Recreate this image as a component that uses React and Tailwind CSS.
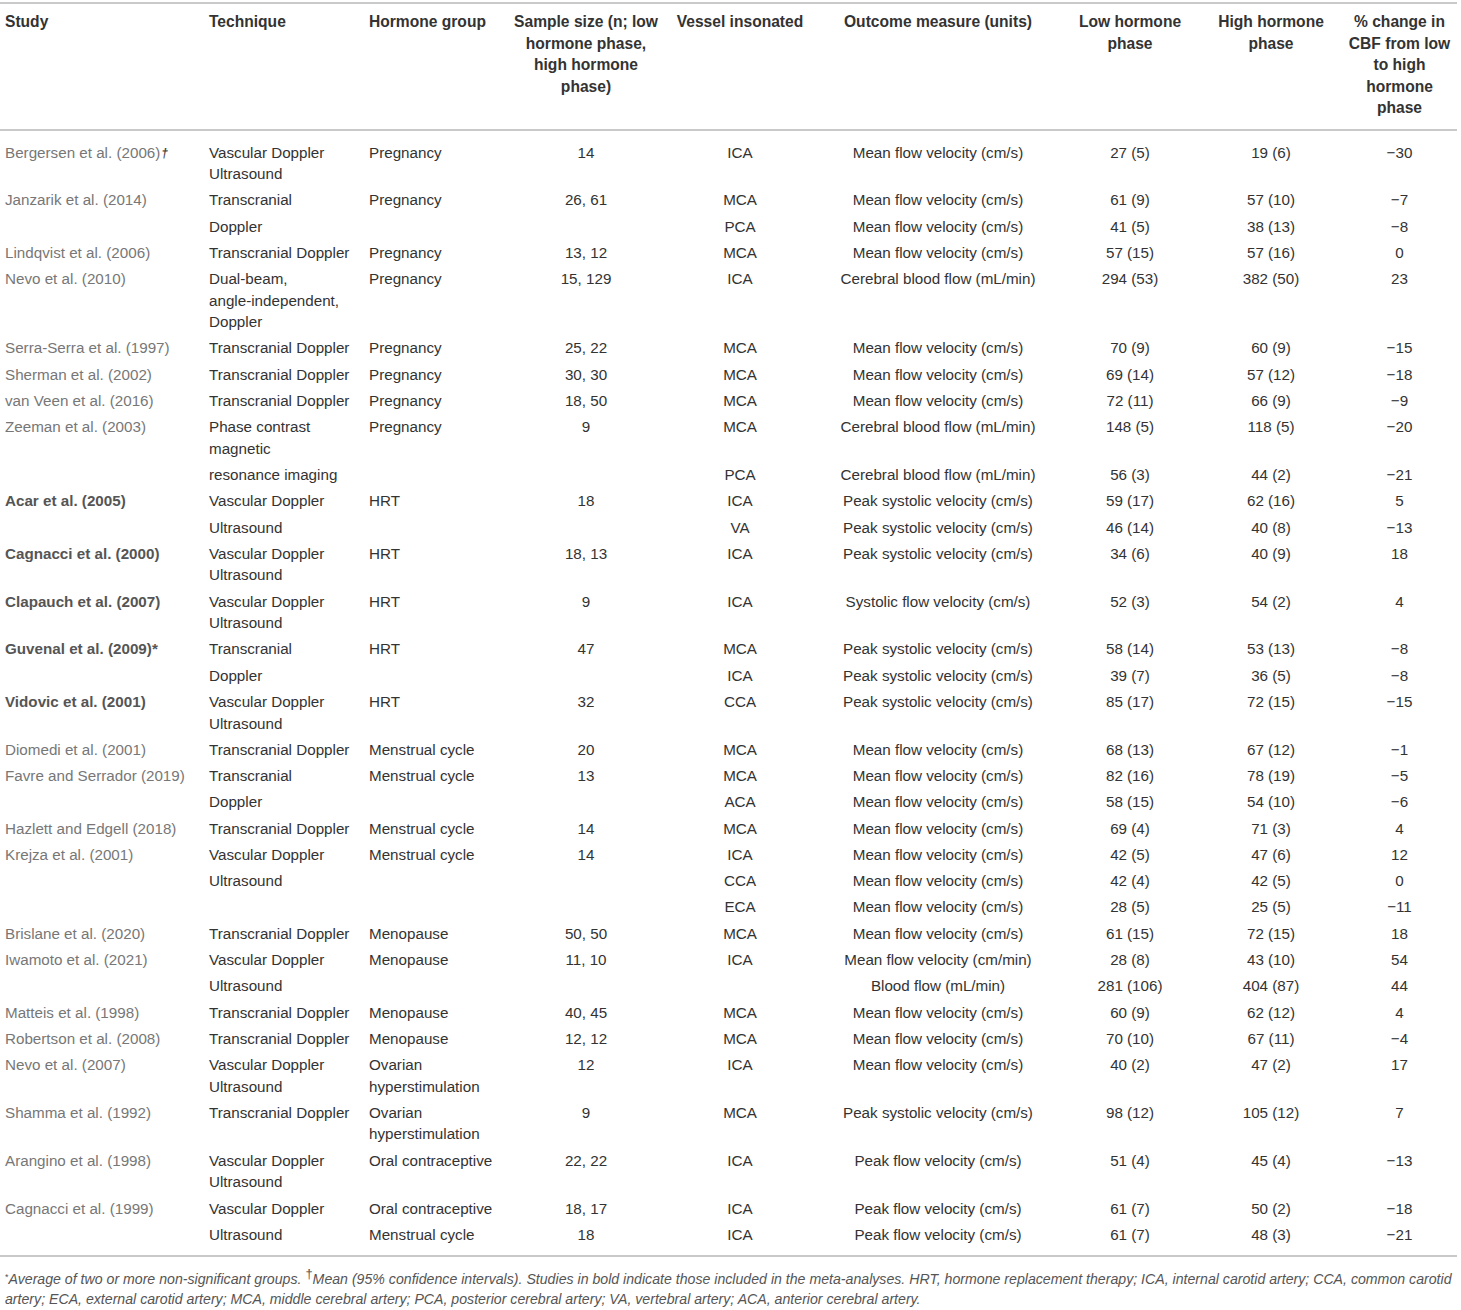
import React from 'react';

const HEAD = [
  { label: ['Study'], align: 'left' },
  { label: ['Technique'], align: 'left' },
  { label: ['Hormone group'], align: 'left' },
  { label: ['Sample size (n; low', 'hormone phase,', 'high hormone', 'phase)'], align: 'center' },
  { label: ['Vessel insonated'], align: 'center' },
  { label: ['Outcome measure (units)'], align: 'center' },
  { label: ['Low hormone', 'phase'], align: 'center' },
  { label: ['High hormone', 'phase'], align: 'center' },
  { label: ['% change in', 'CBF from low', 'to high', 'hormone', 'phase'], align: 'center' },
];

const WIDTHS = ['w-[204px]', 'w-[160px]', 'w-[144px]', 'w-[156px]', 'w-[152px]', 'w-[244px]', 'w-[140px]', 'w-[142px]', 'w-[115px]'];

// [study, bold, mark, technique, hormone, n, vessel, outcome, low, high, change]
const ROWS = [
  ['Bergersen et al. (2006)', false, '†', 'Vascular Doppler\nUltrasound', 'Pregnancy', '14', 'ICA', 'Mean flow velocity (cm/s)', '27 (5)', '19 (6)', '−30'],
  ['Janzarik et al. (2014)', false, '', 'Transcranial', 'Pregnancy', '26, 61', 'MCA', 'Mean flow velocity (cm/s)', '61 (9)', '57 (10)', '−7'],
  ['', false, '', 'Doppler', '', '', 'PCA', 'Mean flow velocity (cm/s)', '41 (5)', '38 (13)', '−8'],
  ['Lindqvist et al. (2006)', false, '', 'Transcranial Doppler', 'Pregnancy', '13, 12', 'MCA', 'Mean flow velocity (cm/s)', '57 (15)', '57 (16)', '0'],
  ['Nevo et al. (2010)', false, '', 'Dual-beam,\nangle-independent,\nDoppler', 'Pregnancy', '15, 129', 'ICA', 'Cerebral blood flow (mL/min)', '294 (53)', '382 (50)', '23'],
  ['Serra-Serra et al. (1997)', false, '', 'Transcranial Doppler', 'Pregnancy', '25, 22', 'MCA', 'Mean flow velocity (cm/s)', '70 (9)', '60 (9)', '−15'],
  ['Sherman et al. (2002)', false, '', 'Transcranial Doppler', 'Pregnancy', '30, 30', 'MCA', 'Mean flow velocity (cm/s)', '69 (14)', '57 (12)', '−18'],
  ['van Veen et al. (2016)', false, '', 'Transcranial Doppler', 'Pregnancy', '18, 50', 'MCA', 'Mean flow velocity (cm/s)', '72 (11)', '66 (9)', '−9'],
  ['Zeeman et al. (2003)', false, '', 'Phase contrast\nmagnetic', 'Pregnancy', '9', 'MCA', 'Cerebral blood flow (mL/min)', '148 (5)', '118 (5)', '−20'],
  ['', false, '', 'resonance imaging', '', '', 'PCA', 'Cerebral blood flow (mL/min)', '56 (3)', '44 (2)', '−21'],
  ['Acar et al. (2005)', true, '', 'Vascular Doppler', 'HRT', '18', 'ICA', 'Peak systolic velocity (cm/s)', '59 (17)', '62 (16)', '5'],
  ['', false, '', 'Ultrasound', '', '', 'VA', 'Peak systolic velocity (cm/s)', '46 (14)', '40 (8)', '−13'],
  ['Cagnacci et al. (2000)', true, '', 'Vascular Doppler\nUltrasound', 'HRT', '18, 13', 'ICA', 'Peak systolic velocity (cm/s)', '34 (6)', '40 (9)', '18'],
  ['Clapauch et al. (2007)', true, '', 'Vascular Doppler\nUltrasound', 'HRT', '9', 'ICA', 'Systolic flow velocity (cm/s)', '52 (3)', '54 (2)', '4'],
  ['Guvenal et al. (2009)*', true, '', 'Transcranial', 'HRT', '47', 'MCA', 'Peak systolic velocity (cm/s)', '58 (14)', '53 (13)', '−8'],
  ['', false, '', 'Doppler', '', '', 'ICA', 'Peak systolic velocity (cm/s)', '39 (7)', '36 (5)', '−8'],
  ['Vidovic et al. (2001)', true, '', 'Vascular Doppler\nUltrasound', 'HRT', '32', 'CCA', 'Peak systolic velocity (cm/s)', '85 (17)', '72 (15)', '−15'],
  ['Diomedi et al. (2001)', false, '', 'Transcranial Doppler', 'Menstrual cycle', '20', 'MCA', 'Mean flow velocity (cm/s)', '68 (13)', '67 (12)', '−1'],
  ['Favre and Serrador (2019)', false, '', 'Transcranial', 'Menstrual cycle', '13', 'MCA', 'Mean flow velocity (cm/s)', '82 (16)', '78 (19)', '−5'],
  ['', false, '', 'Doppler', '', '', 'ACA', 'Mean flow velocity (cm/s)', '58 (15)', '54 (10)', '−6'],
  ['Hazlett and Edgell (2018)', false, '', 'Transcranial Doppler', 'Menstrual cycle', '14', 'MCA', 'Mean flow velocity (cm/s)', '69 (4)', '71 (3)', '4'],
  ['Krejza et al. (2001)', false, '', 'Vascular Doppler', 'Menstrual cycle', '14', 'ICA', 'Mean flow velocity (cm/s)', '42 (5)', '47 (6)', '12'],
  ['', false, '', 'Ultrasound', '', '', 'CCA', 'Mean flow velocity (cm/s)', '42 (4)', '42 (5)', '0'],
  ['', false, '', '', '', '', 'ECA', 'Mean flow velocity (cm/s)', '28 (5)', '25 (5)', '−11'],
  ['Brislane et al. (2020)', false, '', 'Transcranial Doppler', 'Menopause', '50, 50', 'MCA', 'Mean flow velocity (cm/s)', '61 (15)', '72 (15)', '18'],
  ['Iwamoto et al. (2021)', false, '', 'Vascular Doppler', 'Menopause', '11, 10', 'ICA', 'Mean flow velocity (cm/min)', '28 (8)', '43 (10)', '54'],
  ['', false, '', 'Ultrasound', '', '', '', 'Blood flow (mL/min)', '281 (106)', '404 (87)', '44'],
  ['Matteis et al. (1998)', false, '', 'Transcranial Doppler', 'Menopause', '40, 45', 'MCA', 'Mean flow velocity (cm/s)', '60 (9)', '62 (12)', '4'],
  ['Robertson et al. (2008)', false, '', 'Transcranial Doppler', 'Menopause', '12, 12', 'MCA', 'Mean flow velocity (cm/s)', '70 (10)', '67 (11)', '−4'],
  ['Nevo et al. (2007)', false, '', 'Vascular Doppler\nUltrasound', 'Ovarian\nhyperstimulation', '12', 'ICA', 'Mean flow velocity (cm/s)', '40 (2)', '47 (2)', '17'],
  ['Shamma et al. (1992)', false, '', 'Transcranial Doppler', 'Ovarian\nhyperstimulation', '9', 'MCA', 'Peak systolic velocity (cm/s)', '98 (12)', '105 (12)', '7'],
  ['Arangino et al. (1998)', false, '', 'Vascular Doppler\nUltrasound', 'Oral contraceptive', '22, 22', 'ICA', 'Peak flow velocity (cm/s)', '51 (4)', '45 (4)', '−13'],
  ['Cagnacci et al. (1999)', false, '', 'Vascular Doppler', 'Oral contraceptive', '18, 17', 'ICA', 'Peak flow velocity (cm/s)', '61 (7)', '50 (2)', '−18'],
  ['', false, '', 'Ultrasound', 'Menstrual cycle', '18', 'ICA', 'Peak flow velocity (cm/s)', '61 (7)', '48 (3)', '−21'],
];

function Lines({ text }) {
  const parts = text.split('\n');
  return parts.map((p, i) => (
    <React.Fragment key={i}>
      {i > 0 && <br />}
      {p}
    </React.Fragment>
  ));
}

export default function App() {
  const last = ROWS.length - 1;

  return (
    <div className="w-[1461px] bg-white font-['Liberation_Sans',Arial,sans-serif] text-[#333]">
      <table className="w-[1457px] table-fixed border-collapse mt-[2px]">
        <colgroup>
          {WIDTHS.map((w, i) => <col key={i} className={w} />)}
        </colgroup>
        <thead>
          <tr className="border-t-2 border-b-2 border-[#c9c9c9]">
            {HEAD.map((h, i) => (
              <th
                key={i}
                className={`align-top px-[5px] pt-[7px] pb-[10px] text-[15.6px] leading-[21.5px] font-bold text-[#333] ${h.align === 'left' ? 'text-left' : 'text-center'}`}
              >
                {h.label.map((l, j) => (
                  <React.Fragment key={j}>
                    {j > 0 && <br />}
                    {l}
                  </React.Fragment>
                ))}
              </th>
            ))}
          </tr>
        </thead>
        <tbody className="border-b-2 border-[#c9c9c9]">
          {ROWS.map((r, i) => {
            const [study, bold, mark, ...rest] = r;
            const pad = i === 0 ? 'pt-[11px] pb-[2.4px]' : i === last ? 'pt-[2.4px] pb-[10px]' : 'py-[2.4px]';
            return (
              <tr key={i} className="text-[15.2px] leading-[21.5px]">
                <td className={`align-top px-[5px] ${pad} text-left ${bold ? 'font-bold text-[#555]' : 'text-[#777]'}`}>
                  {study}
                  {mark && <sup className="italic font-bold text-[12px] text-[#444] relative top-[-1px] ml-[1px]">{mark}</sup>}
                </td>
                {rest.map((c, j) => (
                  <td
                    key={j}
                    className={`align-top px-[5px] ${pad} ${j < 2 ? 'text-left' : 'text-center'}`}
                  >
                    <Lines text={c} />
                  </td>
                ))}
              </tr>
            );
          })}
        </tbody>
      </table>

      {/* Footnote */}
      <p className="w-[1461px] px-[5px] pt-[12px] text-[14.15px] leading-[20px] italic text-[#555] whitespace-nowrap">
        <sup className="not-italic text-[9px]">*</sup>Average of two or more non-significant groups.{' '}
        <sup className="not-italic text-[13px]">†</sup>Mean (95% confidence intervals). Studies in bold indicate those included in the meta-analyses. HRT, hormone replacement therapy; ICA, internal carotid artery; CCA, common carotid
        <br />
        artery; ECA, external carotid artery; MCA, middle cerebral artery; PCA, posterior cerebral artery; VA, vertebral artery; ACA, anterior cerebral artery.
      </p>
    </div>
  );
}
